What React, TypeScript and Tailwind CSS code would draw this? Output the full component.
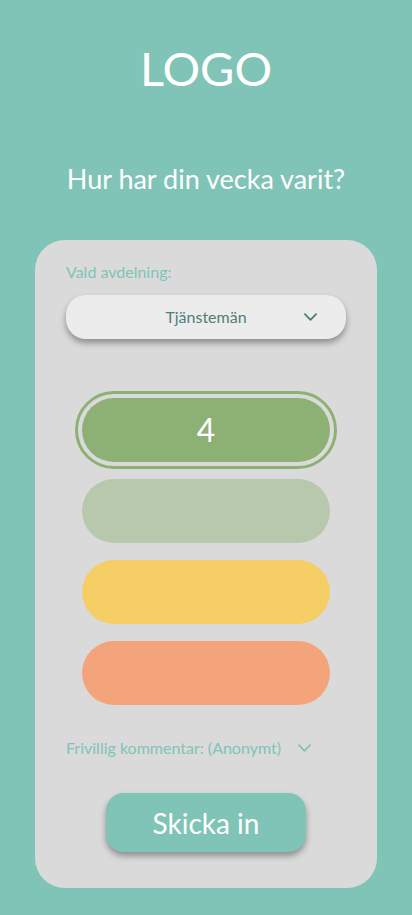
import { useState } from 'react'

const OPTIONS = [
  { value: 4, bg: 'bg-[#8db174]', ring: 'outline-[#8db174]' },
  { value: 3, bg: 'bg-[#b8c8ad]', ring: 'outline-[#b8c8ad]' },
  { value: 2, bg: 'bg-[#f5cf65]', ring: 'outline-[#f5cf65]' },
  { value: 1, bg: 'bg-[#f4a47a]', ring: 'outline-[#f4a47a]' },
]

function Chevron({ className }: { className?: string }) {
  return (
    <svg viewBox="0 0 14 8" className={className} fill="none" stroke="currentColor" strokeWidth="2" strokeLinecap="round" strokeLinejoin="round">
      <path d="M1 1l6 6 6-6" />
    </svg>
  )
}

export default function App() {
  const [selected, setSelected] = useState(4)

  return (
    <div className="min-h-[915px] w-full bg-[#80c4b7] flex flex-col items-center font-['Lato','Liberation_Sans',sans-serif]">
      <h1 className="mt-[45px] text-[47px] leading-[47px] text-white">LOGO</h1>
      <h2 className="mt-[73px] text-[27px] leading-[27px] text-white">Hur har din vecka varit?</h2>

      <div className="mt-[48px] w-[342px] bg-[#dadada] rounded-[30px] px-[31px] pt-[24px] pb-[36px] flex flex-col">
        <p className="text-[16px] leading-[16px] text-[#80c4b7]">Vald avdelning:</p>

        {/* Department dropdown */}
        <button className="relative mt-[15px] h-[44px] w-full rounded-[20px] bg-[#ececec] shadow-[0_4px_6px_rgba(0,0,0,0.35)] flex items-center justify-center">
          <span className="text-[16px] text-[#4f7f77]">Tjänstemän</span>
          <Chevron className="absolute right-[29px] top-1/2 -translate-y-1/2 w-[13px] h-[8px] text-[#4f7f77]" />
        </button>

        {/* Rating options */}
        <div className="mt-[59px] mx-[16px] flex flex-col gap-[17px]">
          {OPTIONS.map((o) => (
            <button
              key={o.value}
              onClick={() => setSelected(o.value)}
              className={`h-[64px] w-full rounded-[32px] ${o.bg} flex items-center justify-center text-white text-[32px] ${selected === o.value ? `outline-[3px] outline-solid outline-offset-[4px] ${o.ring}` : ''}`}
            >
              {selected === o.value ? o.value : ''}
            </button>
          ))}
        </div>

        <button className="mt-[35px] flex items-center gap-[17px] text-[#80c4b7]">
          <span className="text-[16px] leading-[16px]">Frivillig kommentar: (Anonymt)</span>
          <Chevron className="w-[13px] h-[8px]" />
        </button>

        <button className="mt-[37px] self-center w-[200px] h-[59px] rounded-[18px] bg-[#80c4b7] text-white text-[28px] shadow-[0_4px_6px_rgba(0,0,0,0.35)]">
          Skicka in
        </button>
      </div>
    </div>
  )
}
